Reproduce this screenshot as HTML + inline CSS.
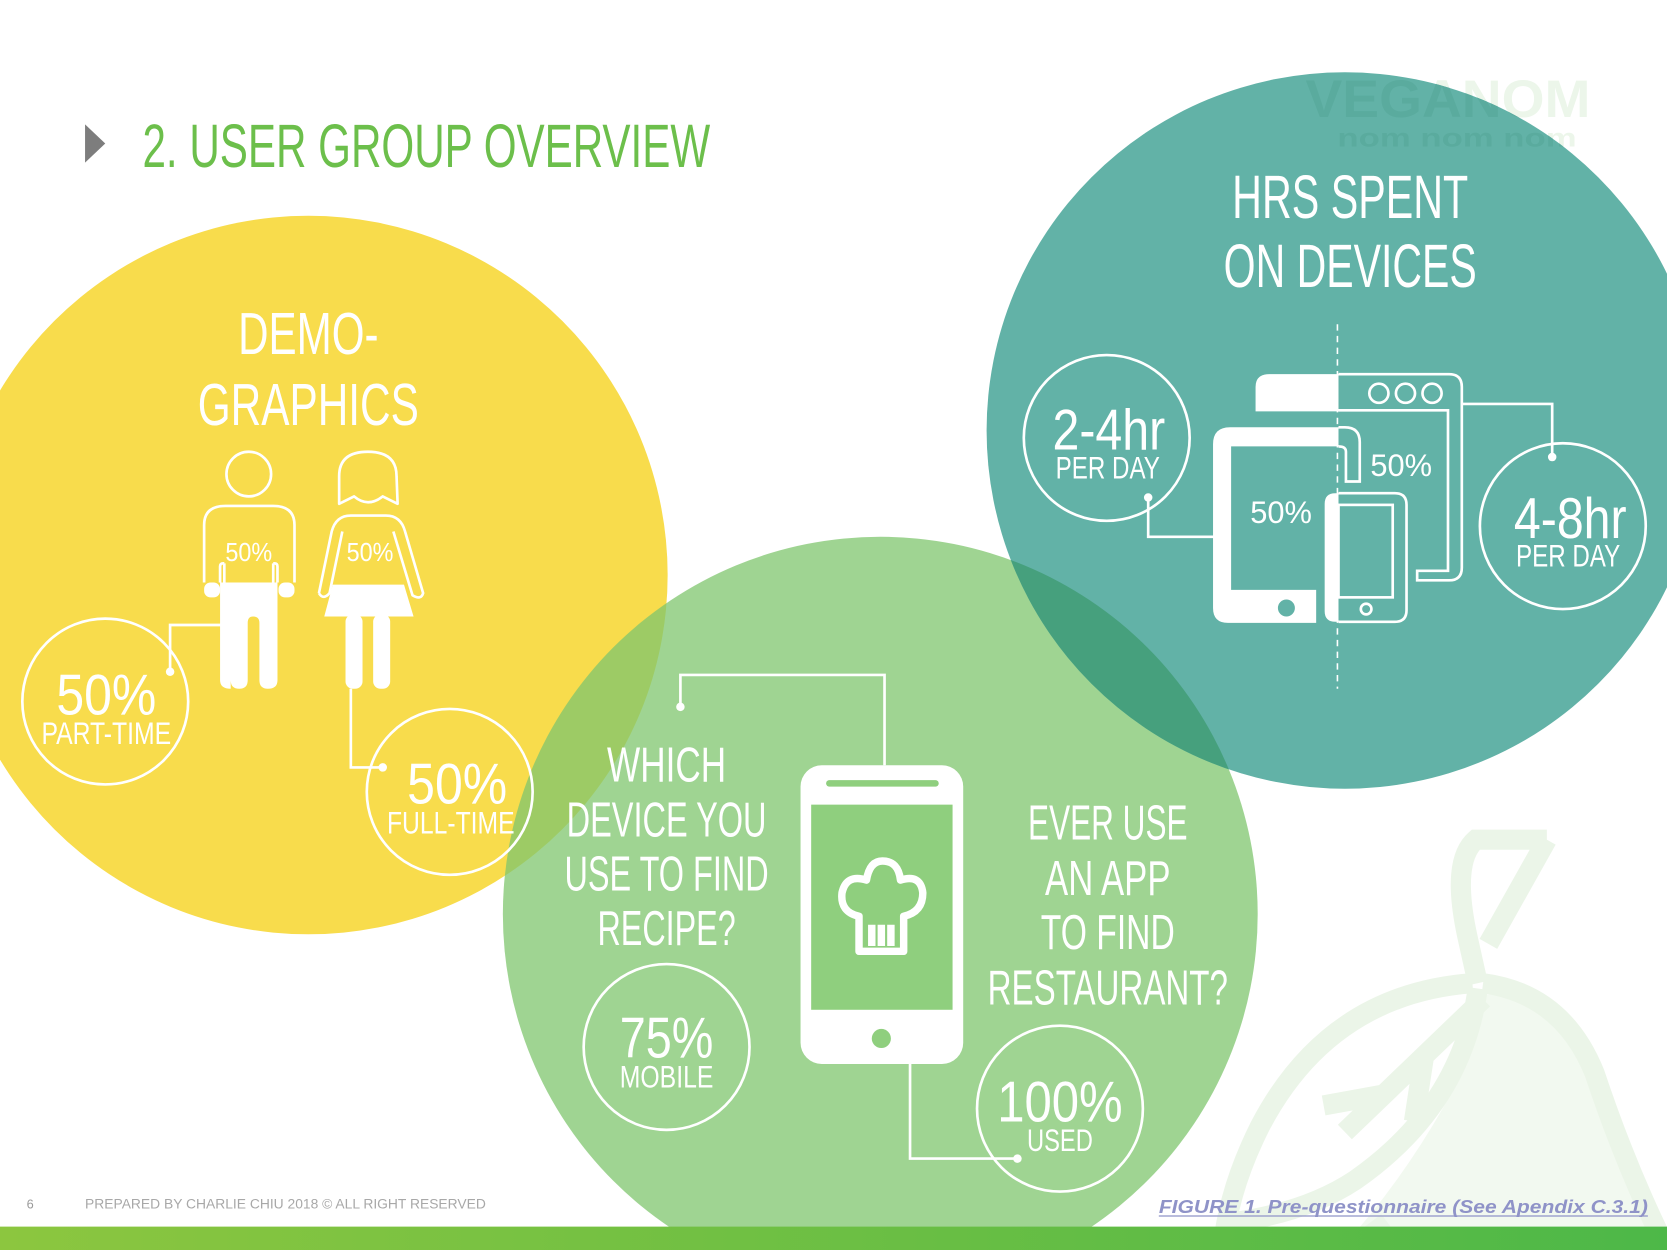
<!DOCTYPE html>
<html><head><meta charset="utf-8"><style>
html,body{margin:0;padding:0;background:#fff;overflow:hidden}
svg{display:block}
text{font-family:"Liberation Sans Narrow","Liberation Sans",sans-serif;fill:#fff}
</style></head><body>
<svg width="1667" height="1250" viewBox="0 0 1568 1176" preserveAspectRatio="none" xmlns="http://www.w3.org/2000/svg">
<defs><linearGradient id="bar" x1="0" x2="1"><stop offset="0" stop-color="#8cc63f"/><stop offset="1" stop-color="#4db848"/></linearGradient>
<clipPath id="tc"><circle cx="1265" cy="405" r="337"/></clipPath></defs>
<rect width="1568" height="1176" fill="#fff"/>
<!-- pear watermark -->
<path d="M1395 935 Q1470 940 1500 1010 Q1530 1100 1560 1176 L1260 1176 Q1330 1100 1380 1000 Z" fill="#f2f9f0"/>
<g fill="none" stroke="#ebf5e8" stroke-width="19">
<path d="M1455 790 L1400 888 M1455 790 L1388 790 Q1365 810 1380 880 L1390 925"/>
<path d="M1385 925 Q1250 935 1185 1060 Q1155 1120 1150 1176"/>
<path d="M1395 925 Q1470 935 1500 1010 Q1530 1100 1568 1176"/>
<path d="M1390 930 Q1375 1040 1275 1110 Q1230 1140 1160 1150"/>
<path d="M1395 940 L1265 1065 M1340 990 L1330 1055 M1300 1030 L1245 1040"/>
<path d="M1305 1150 L1270 1176"/>
</g>
<text x="1228" y="110" font-family="Liberation Sans" font-weight="bold" font-size="50" style="fill:#ecf6ea" textLength="268" lengthAdjust="spacingAndGlyphs">VEGANOM</text>
<text x="1258" y="138" font-family="Liberation Sans" font-weight="bold" font-size="24" style="fill:#ecf6ea" textLength="225" lengthAdjust="spacingAndGlyphs">nom nom nom</text>
<!-- circles -->
<circle cx="290" cy="541" r="338" fill="#f8dc4c"/>
<circle cx="828" cy="860" r="355" fill="#7fc56d" fill-opacity="0.75"/>
<circle cx="1265" cy="405" r="337" fill="#62b2a7"/>
<g clip-path="url(#tc)">
<circle cx="828" cy="860" r="355" fill="#46a07d"/>
<text x="1228" y="110" font-family="Liberation Sans" font-weight="bold" font-size="50" style="fill:#5aab9e" textLength="268" lengthAdjust="spacingAndGlyphs">VEGANOM</text>
<text x="1258" y="138" font-family="Liberation Sans" font-weight="bold" font-size="24" style="fill:#5aab9e" textLength="225" lengthAdjust="spacingAndGlyphs">nom nom nom</text>
</g>
<!-- title -->
<polygon points="80,117 80,153 99,135" fill="#7d7d7d"/>
<text x="134" y="157" font-size="58" style="fill:#6cbf4b" textLength="534" lengthAdjust="spacingAndGlyphs">2. USER GROUP OVERVIEW</text>
<!-- demographics -->
<text x="290" y="333" font-size="56" text-anchor="middle" textLength="132" lengthAdjust="spacingAndGlyphs">DEMO-</text>
<text x="290" y="400" font-size="56" text-anchor="middle" textLength="208" lengthAdjust="spacingAndGlyphs">GRAPHICS</text>
<g fill="none" stroke="#fff" stroke-width="2.5" stroke-linejoin="round">
<circle cx="234" cy="446" r="21"/>
<path d="M192 548 L192 494 Q192 476 212 476 L257 476 Q277 476 277 494 L277 548"/>
<path d="M207 548 L207 533 Q207 530 210 530 L211 530 M261 548 L261 533 Q261 530 258 530 L257 530 M211 530 L211 548 M257 530 L257 548"/>
<path d="M319 474 L319 448 Q319 425 346 425 Q373 425 373 448 L374 474 L360 467 Q346 478 333 467 Z"/>
<path d="M300 558 L312 500 Q316 485 330 485 L363 485 Q377 485 381 500 L398 558 Q396 565 388 560 L370 500 M300 558 Q304 565 310 558 L322 500"/>
</g>
<g fill="#fff">
<rect x="192" y="548" width="15" height="14" rx="6"/><rect x="262" y="548" width="15" height="14" rx="6"/>
<path d="M207 548 L261 548 L261 640 Q261 648 252 648 Q244 648 244 640 L244 586 Q244 580 238 580 Q233 580 233 586 L233 640 Q233 648 225 648 Q217 648 217 640 L217 648 Q207 648 207 640 Z"/>
<path d="M313 550 L380 550 L389 580 L305 580 Z"/>
<rect x="325" y="578" width="16" height="70" rx="7"/><rect x="351" y="578" width="16" height="70" rx="7"/>
</g>
<text x="234" y="528" font-size="24" text-anchor="middle" textLength="44" lengthAdjust="spacingAndGlyphs">50%</text>
<text x="348" y="528" font-size="24" text-anchor="middle" textLength="44" lengthAdjust="spacingAndGlyphs">50%</text>
<g fill="none" stroke="#fff" stroke-width="2.5">
<circle cx="99" cy="660" r="78"/><circle cx="423" cy="745" r="78"/>
<path d="M160 632 L160 588 L210 588 M330 648 L330 722 L360 722"/>
</g>
<circle cx="160" cy="632" r="4" fill="#fff"/><circle cx="360" cy="722" r="4" fill="#fff"/>
<text x="100" y="672" font-size="54" text-anchor="middle" textLength="94" lengthAdjust="spacingAndGlyphs">50%</text>
<text x="100" y="700" font-size="30" text-anchor="middle" textLength="122" lengthAdjust="spacingAndGlyphs">PART-TIME</text>
<text x="430" y="756" font-size="54" text-anchor="middle" textLength="94" lengthAdjust="spacingAndGlyphs">50%</text>
<text x="424" y="784" font-size="30" text-anchor="middle" textLength="120" lengthAdjust="spacingAndGlyphs">FULL-TIME</text>
<!-- hrs spent -->
<text x="1270" y="205" font-size="58" text-anchor="middle" textLength="222" lengthAdjust="spacingAndGlyphs">HRS SPENT</text>
<text x="1270" y="270" font-size="58" text-anchor="middle" textLength="238" lengthAdjust="spacingAndGlyphs">ON DEVICES</text>
<g fill="none" stroke="#fff" stroke-width="2.5">
<circle cx="1041" cy="412" r="78"/><circle cx="1470" cy="495" r="78"/>
<path d="M1080 468 L1080 505 L1142 505 M1375 380 L1460 380 L1460 430"/>
<line x1="1258" y1="305" x2="1258" y2="648" stroke-dasharray="6 5" stroke-width="1.5"/>
<path d="M1259 352 H1363 Q1375 352 1375 364 V534 Q1375 546 1363 546 H1333 V537 H1362 V386 H1259"/>
<path d="M1259 402 H1265 Q1279 402 1279 416 V453 H1266 V425 Q1266 420 1259 420"/>
<path d="M1259 464 H1312 Q1323 464 1323 475 V574 Q1323 585 1312 585 H1259"/>
<rect x="1259" y="475" width="51" height="87"/>
<circle cx="1285" cy="573" r="5"/>
<circle cx="1297" cy="370" r="9"/><circle cx="1322" cy="370" r="9"/><circle cx="1347" cy="370" r="9"/>
</g>
<circle cx="1080" cy="468" r="4" fill="#fff"/><circle cx="1460" cy="430" r="4" fill="#fff"/>
<path d="M1181 387 L1181 364 Q1181 352 1194 352 L1259 352 L1259 387 Z" fill="#fff"/>
<path d="M1259 402 L1157 402 Q1141 402 1141 418 L1141 572 Q1141 586 1155 586 L1238 586 L1238 555 L1158 555 L1158 420 L1259 420 Z" fill="#fff"/>
<path d="M1259 464 L1256 464 Q1246 464 1246 474 L1246 575 Q1246 585 1256 585 L1259 585 Z" fill="#fff"/>
<circle cx="1210" cy="572" r="8" fill="#62b2a7"/>
<text x="1205" y="492" font-size="30" text-anchor="middle" textLength="58" lengthAdjust="spacingAndGlyphs">50%</text>
<text x="1318" y="448" font-size="30" text-anchor="middle" textLength="58" lengthAdjust="spacingAndGlyphs">50%</text>
<text x="1043" y="423" font-size="54" text-anchor="middle" textLength="106" lengthAdjust="spacingAndGlyphs">2-4hr</text>
<text x="1042" y="450" font-size="30" text-anchor="middle" textLength="98" lengthAdjust="spacingAndGlyphs">PER DAY</text>
<text x="1477" y="506" font-size="54" text-anchor="middle" textLength="106" lengthAdjust="spacingAndGlyphs">4-8hr</text>
<text x="1475" y="533" font-size="30" text-anchor="middle" textLength="98" lengthAdjust="spacingAndGlyphs">PER DAY</text>
<!-- green section -->
<text x="627" y="735" font-size="46" text-anchor="middle" textLength="112" lengthAdjust="spacingAndGlyphs">WHICH</text>
<text x="627" y="787" font-size="46" text-anchor="middle" textLength="188" lengthAdjust="spacingAndGlyphs">DEVICE YOU</text>
<text x="627" y="838" font-size="46" text-anchor="middle" textLength="192" lengthAdjust="spacingAndGlyphs">USE TO FIND</text>
<text x="627" y="889" font-size="46" text-anchor="middle" textLength="130" lengthAdjust="spacingAndGlyphs">RECIPE?</text>
<text x="1042" y="790" font-size="46" text-anchor="middle" textLength="150" lengthAdjust="spacingAndGlyphs">EVER USE</text>
<text x="1042" y="842" font-size="46" text-anchor="middle" textLength="118" lengthAdjust="spacingAndGlyphs">AN APP</text>
<text x="1042" y="893" font-size="46" text-anchor="middle" textLength="126" lengthAdjust="spacingAndGlyphs">TO FIND</text>
<text x="1042" y="945" font-size="46" text-anchor="middle" textLength="226" lengthAdjust="spacingAndGlyphs">RESTAURANT?</text>
<g fill="none" stroke="#fff" stroke-width="2.5">
<circle cx="627" cy="985" r="78"/><circle cx="997" cy="1043" r="78"/>
<path d="M640 665 L640 635 L832 635 L832 720 M856 1000 L856 1090 L957 1090"/>
</g>
<circle cx="640" cy="665" r="4" fill="#fff"/><circle cx="957" cy="1090" r="4" fill="#fff"/>
<rect x="753" y="720" width="153" height="281" rx="20" fill="#fff"/>
<rect x="763" y="757" width="133" height="193" fill="#8fcf7e"/>
<rect x="777" y="734" width="106" height="6" rx="3" fill="#8fcf7e"/>
<circle cx="829" cy="977" r="9" fill="#8fcf7e"/>
<g fill="none" stroke="#fff" stroke-width="7" stroke-linejoin="round">
<path d="M808 862 Q790 858 792 840 Q796 822 815 828 Q818 810 830 810 Q845 810 847 828 Q866 822 868 840 Q868 858 850 862 L850 895 L808 895 Z"/>
<path d="M820 870 L820 890 M829 870 L829 890 M838 870 L838 890"/>
</g>
<text x="627" y="995" font-size="54" text-anchor="middle" textLength="88" lengthAdjust="spacingAndGlyphs">75%</text>
<text x="627" y="1023" font-size="30" text-anchor="middle" textLength="88" lengthAdjust="spacingAndGlyphs">MOBILE</text>
<text x="997" y="1055" font-size="54" text-anchor="middle" textLength="118" lengthAdjust="spacingAndGlyphs">100%</text>
<text x="997" y="1083" font-size="30" text-anchor="middle" textLength="62" lengthAdjust="spacingAndGlyphs">USED</text>
<!-- footer -->
<text x="25" y="1137" font-family="Liberation Sans" font-size="12" style="fill:#9a9a9a">6</text>
<text x="80" y="1137" font-family="Liberation Sans" font-size="13" style="fill:#a8a8a8" textLength="377" lengthAdjust="spacingAndGlyphs">PREPARED BY CHARLIE CHIU 2018  © ALL RIGHT RESERVED</text>
<text x="1550" y="1141" font-family="Liberation Sans" font-size="17" font-weight="bold" font-style="italic" text-anchor="end" style="fill:#8f93c8" textLength="460" lengthAdjust="spacingAndGlyphs">FIGURE 1. Pre-questionnaire  (See Apendix C.3.1)</text>
<line x1="1090" y1="1144" x2="1550" y2="1144" stroke="#8f93c8" stroke-width="1.2"/>
<rect x="0" y="1154" width="1568" height="22" fill="url(#bar)"/>
</svg>
</body></html>
